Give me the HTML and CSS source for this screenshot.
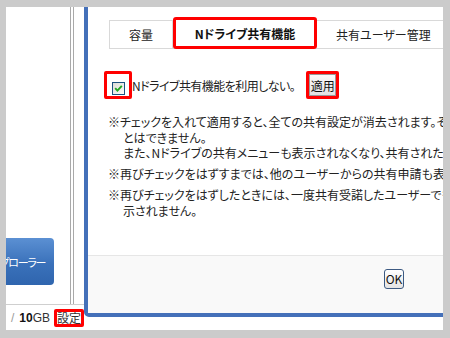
FILE: index.html
```html
<!DOCTYPE html>
<html lang="ja">
<head>
<meta charset="utf-8">
<title>Nドライブ設定</title>
<link rel="stylesheet" href="styles.css">
</head>
<body>
<div class="screen">
  <div class="panel">
    <div class="page">
      <div class="page-main">
        <aside class="sidebar">
          <a class="explorer-btn">Nドライブエクスプローラー</a>
        </aside>
        <div class="pane"></div>
      </div>
      <div class="page-foot">
        <span class="slash">/</span>
        <span class="quota"><b>10</b>GB</span>
        <span class="mark mark-setting">設定</span>
      </div>
    </div>

    <div class="dialog">
      <div class="dialog-body">
        <div class="tabs">
          <div class="tab tab-first">容量</div>
          <div class="tab tab-active">Nドライブ共有機能</div>
          <div class="tab tab-last">共有ユーザー管理</div>
        </div>

        <div class="option-row">
          <span class="mark mark-check">
            <span class="checkbox" role="checkbox" aria-checked="true">
              <svg viewBox="0 0 11 11" width="11" height="11"><path d="M2.2 5.2 L4.4 7.6 L8.8 2.8" fill="none" stroke="#21a621" stroke-width="1.9"/></svg>
            </span>
          </span>
          <span class="option-label">Nドライブ共有機能を利用しない。</span>
          <span class="mark mark-apply"><button class="apply-btn">適用</button></span>
        </div>

        <div class="notes">
          <p>※チェックを入れて適用すると、全ての共有設定が消去されます。その後チェックをはずしても元に戻すこ<br>とはできません。<br>また、Nドライブの共有メニューも表示されなくなり、共有されたフォルダも表示されません。</p>
          <p>※再びチェックをはずすまでは、他のユーザーからの共有申請も表示されません。</p>
          <p>※再びチェックをはずしたときには、一度共有受諾したユーザーでもフォルダは表<br>示されません。</p>
        </div>
      </div>
      <div class="dialog-foot">
        <button class="ok-btn">OK</button>
      </div>
    </div>
  </div>
</div>
</body>
</html>
```

FILE: styles.css
```css
* { box-sizing: border-box; }

html, body {
  margin: 0;
  padding: 0;
}

body {
  width: 450px;
  height: 338px;
  overflow: hidden;
  font-family: "Noto Sans CJK JP", "Liberation Sans", sans-serif;
  font-size: 12px;
  color: #222;
}

.screen {
  width: 450px;
  height: 338px;
  background: #cbcbcb;
  padding: 7px 7px 8px 6px;
}

.panel {
  position: relative;
  width: 437px;
  height: 323px;
  overflow: hidden;
  background: #fff;
}

/* background page */
.page {
  display: flex;
  flex-direction: column;
  height: 100%;
}

.page-main {
  display: flex;
  height: 297px;
}

.sidebar {
  width: 65px;
  border-right: 1px solid #a9a9a9;
  display: flex;
  flex-direction: column;
  justify-content: flex-end;
  align-items: flex-end;
  padding: 0 16px 19px 0;
}

.explorer-btn {
  display: flex;
  align-items: center;
  justify-content: flex-end;
  height: 47px;
  width: 130px;
  padding-right: 9px;
  border-radius: 4px;
  background: linear-gradient(#5b90d3, #3a71ba 55%, #2f65ae);
  color: #fff;
  font-size: 11px;
  letter-spacing: -1.3px;
  font-feature-settings: "palt";
  white-space: nowrap;
}

.pane {
  flex: 1;
  margin-left: 2px;
  border-left: 1px solid #a9a9a9;
}

.page-foot {
  flex: 1;
  border-top: 1px solid #cfcfcf;
  display: flex;
  align-items: center;
  padding: 1px 0 0 5px;
  font-family: "Liberation Sans", sans-serif;
  font-size: 12px;
}

.slash {
  color: #9a9a9a;
  margin-right: 5px;
}

.quota {
  color: #333;
  margin-right: 4px;
}

.quota b {
  color: #111;
}

.mark {
  border: 3px solid #ff0000;
  border-radius: 2px;
}

.mark-setting {
  display: flex;
  align-items: center;
  justify-content: center;
  width: 30px;
  height: 18px;
  font-family: "Noto Sans CJK JP", sans-serif;
  font-size: 12px;
  line-height: 12px;
  color: #333;
}

/* dialog window */
.dialog {
  position: absolute;
  left: 78px;
  top: -10px;
  width: 620px;
  height: 320px;
  border: 4px solid #4470b9;
  border-radius: 5px;
  background: #fff;
  display: flex;
  flex-direction: column;
}

.dialog-body {
  flex: 1;
  padding: 19px 0 0 20px;
}

.tabs {
  display: flex;
  align-items: flex-start;
  height: 29px;
  margin-left: 1px;
  border-top: 1px solid #d9d9d9;
  border-bottom: 1px solid #d9d9d9;
}

.tab {
  display: flex;
  align-items: center;
  height: 27px;
  white-space: nowrap;
  font-feature-settings: "palt";
}

.tab-first {
  width: 64px;
  justify-content: center;
  border-left: 1px solid #d9d9d9;
  border-right: 1px solid #d9d9d9;
}

.tab-active {
  position: relative;
  z-index: 1;
  width: 144px;
  height: 32px;
  margin-top: -4px;
  justify-content: center;
  border: 3px solid #ff0000;
  border-radius: 3px;
  background: #fff;
  font-weight: bold;
  color: #111;
}

.tab-last {
  padding-left: 19px;
}

.option-row {
  display: flex;
  align-items: center;
  height: 28px;
  margin: 22px 0 0 -4px;
  font-feature-settings: "palt";
  white-space: nowrap;
}

.mark-check {
  display: flex;
  width: 28px;
  height: 28px;
  padding: 8px 0 0 5px;
}

.checkbox {
  display: flex;
  align-items: center;
  justify-content: center;
  width: 13px;
  height: 13px;
  border: 1px solid #1c5180;
  background: linear-gradient(135deg, #dcdcd6, #fdfdfb);
}

.option-label {
  margin-left: 0;
  letter-spacing: -0.55px;
}

.mark-apply {
  display: flex;
  width: 33px;
  height: 28px;
  margin-left: 11px;
}

.apply-btn {
  width: 100%;
  height: 100%;
  margin: 0;
  padding: 0;
  border: 1px solid #9a9a9a;
  background: linear-gradient(#fbfbfb, #e2e2e2);
  font-family: "Noto Sans CJK JP", sans-serif;
  font-size: 12px;
  color: #111;
}

.notes {
  margin-top: 15px;
  white-space: nowrap;
  font-feature-settings: "palt";
  line-height: 15.5px;
}

.notes p {
  margin: 0 0 5.5px;
  padding-left: 15px;
  text-indent: -15px;
}

.dialog-foot {
  height: 58px;
  border-top: 1px solid #e6e6e6;
  background: #f9f9f9;
  display: flex;
  justify-content: center;
  align-items: flex-start;
  padding-top: 13px;
}

.ok-btn {
  width: 20px;
  height: 20px;
  margin: 0;
  padding: 0;
  border: 1px solid #3d5a82;
  border-radius: 3px;
  background: linear-gradient(#ffffff, #e4e4e4);
  font-family: "Noto Sans CJK JP", sans-serif;
  font-size: 12px;
  line-height: 16px;
  color: #111;
}
```
